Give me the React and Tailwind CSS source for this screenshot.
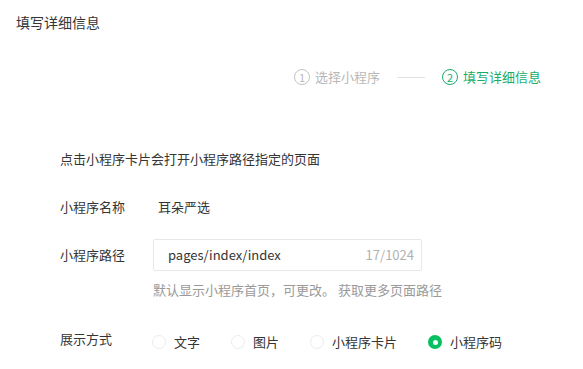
export default function App() {
  const options = ['文字', '图片', '小程序卡片', '小程序码'];
  const selected = 3;

  return (
    <div
      className="w-[583px] h-[369px] bg-white overflow-hidden text-[#353535] text-[13px]"
      style={{ fontFamily: '"Noto Sans CJK SC", "Noto Sans", sans-serif' }}
    >
      {/* Header */}
      <div className="pl-4 pt-[12px] h-5 leading-5 text-[14px]">填写详细信息</div>

      {/* Steps */}
      <div className="mt-[47px] flex items-center justify-end pr-[42px] h-5 leading-5 text-[13px]">
        <div className="flex items-center gap-[5px] text-[#b8b8b8]">
          <span className="w-[16px] h-[16px] rounded-full border border-[#c4c4c4] flex items-center justify-center text-[11px] leading-none">1</span>
          <span>选择小程序</span>
        </div>
        <div className="w-[28px] h-px bg-[#e2e2e2] mx-[17px]" />
        <div className="flex items-center gap-[5px] text-[#1aad6a]">
          <span className="w-[16px] h-[16px] rounded-full border border-[#1aad6a] flex items-center justify-center text-[11px] leading-none">2</span>
          <span>填写详细信息</span>
        </div>
      </div>

      {/* Form */}
      <div className="pl-[60px] mt-[62px]">
        <div className="h-5 leading-5">点击小程序卡片会打开小程序路径指定的页面</div>

        <div className="mt-[28px] flex items-center h-5 leading-5">
          <div className="w-[98px]">小程序名称</div>
          <div>耳朵严选</div>
        </div>

        <div className="mt-[22px] flex items-start">
          <div className="w-[93px] h-[32px] leading-[32px]">小程序路径</div>
          <div className="flex flex-col">
            <div className="w-[269px] h-[32px] border border-[#e7e7e7] rounded-[2px] flex items-center justify-between pl-[14px] pr-[7px]">
              <span className="text-[#353535]">pages/index/index</span>
              <span className="text-[#b2b2b2]">17/1024</span>
            </div>
            <div className="mt-[9px] h-5 leading-5 text-[#9a9a9a] whitespace-nowrap">
              默认显示小程序首页，可更改。 <span>获取更多页面路径</span>
            </div>
          </div>
        </div>

        <div className="mt-[32px] flex items-start">
          <div className="w-[92px] h-5 leading-5 -mt-[3px]">展示方式</div>
          <div className="flex items-center h-5 leading-5">
            {options.map((o, i) => (
              <label key={o} className="flex items-center mr-[31px]">
                {i === selected ? (
                  <span className="w-[14px] h-[14px] rounded-full bg-[#07c160] flex items-center justify-center">
                    <span className="w-[5px] h-[5px] rounded-full bg-white" />
                  </span>
                ) : (
                  <span className="w-[14px] h-[14px] rounded-full border border-[#ececec]" />
                )}
                <span className="ml-[8px]">{o}</span>
              </label>
            ))}
          </div>
        </div>
      </div>
    </div>
  );
}
